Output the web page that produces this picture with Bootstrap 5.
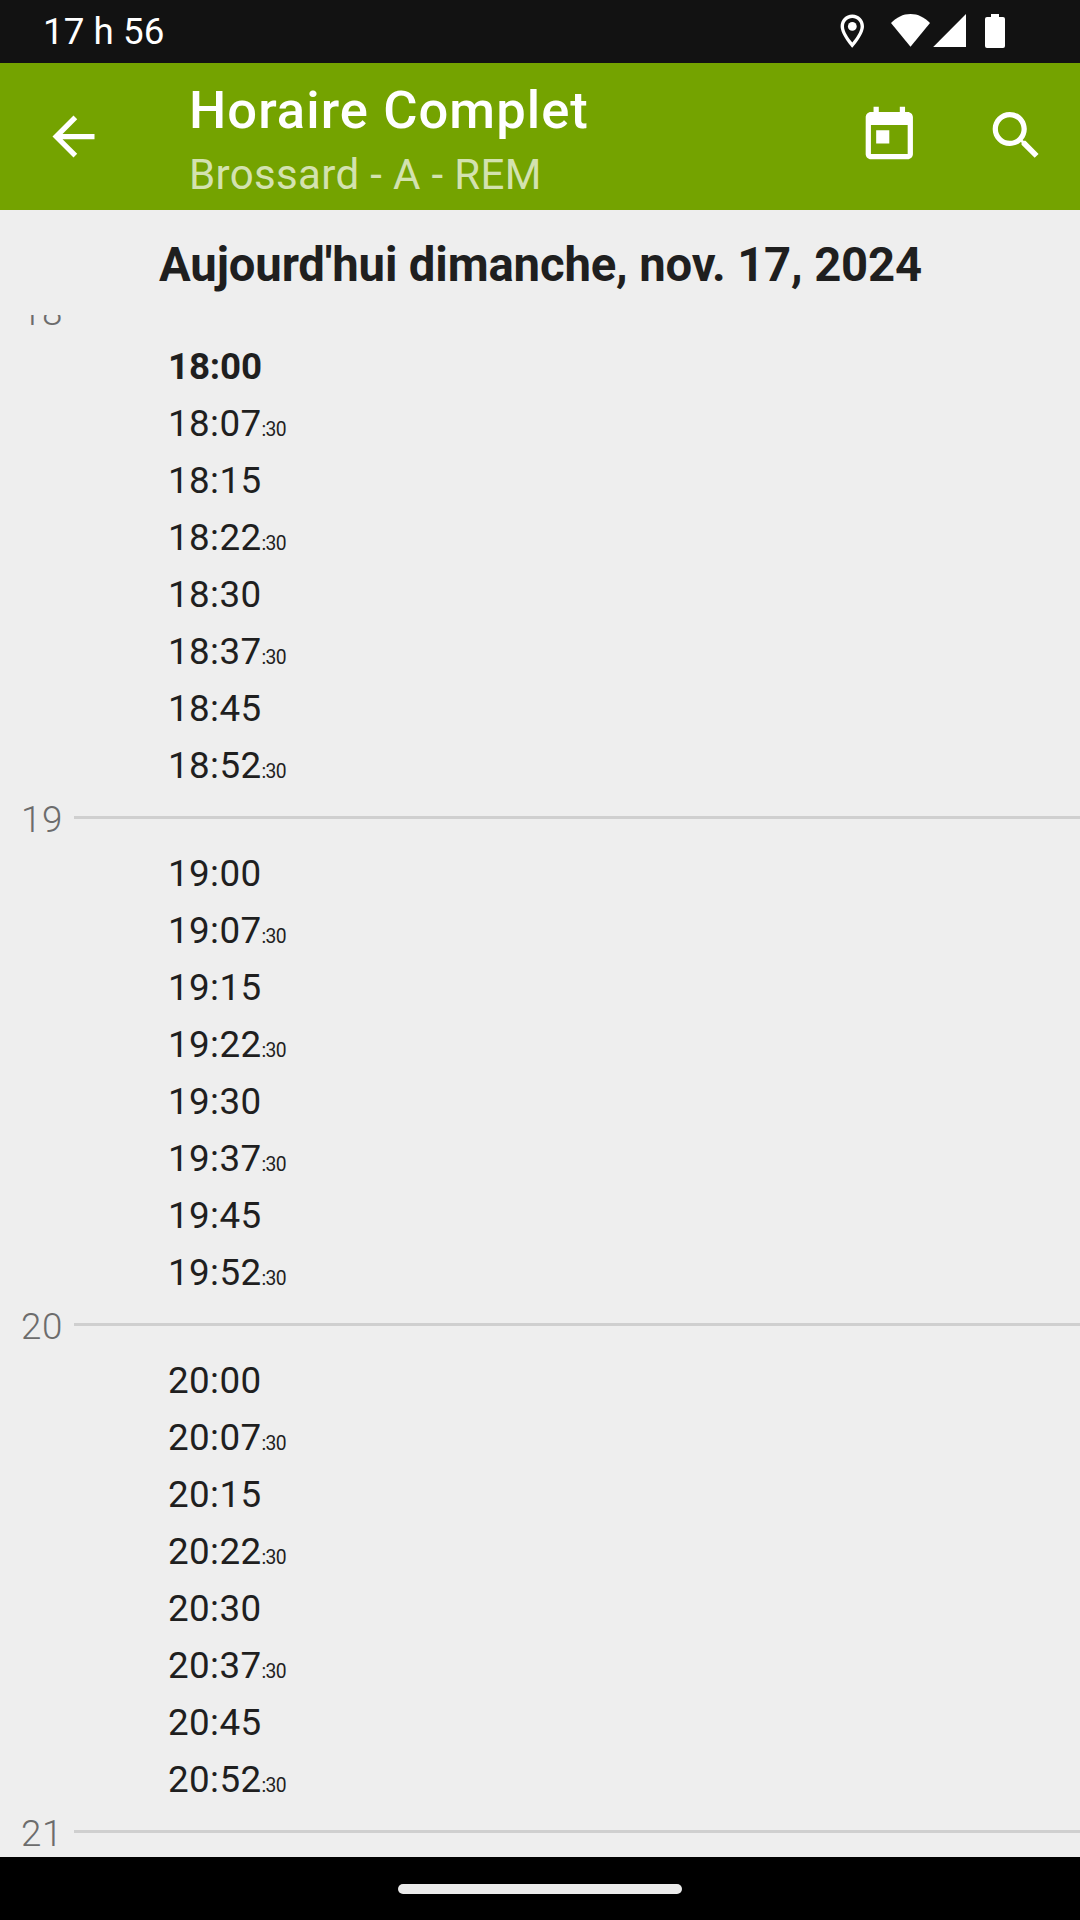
<!DOCTYPE html>
<html lang="fr">
<head>
<meta charset="utf-8">
<meta name="viewport" content="width=device-width, initial-scale=1">
<title>Horaire Complet</title>
<link rel="stylesheet" href="https://cdn.jsdelivr.net/npm/bootstrap@5.3.0/dist/css/bootstrap.min.css">
<style>
  body { font-family: Roboto, "Noto Sans", sans-serif; background: #eee; color: #1f1f1f; font-size: 36.75px; }
  .screen { width: 1080px; height: 1920px; }
  .status-bar { height: 63px; background: #121212; padding-left: 43px; }
  .clock { line-height: 64px; letter-spacing: .05px; }
  .app-bar { height: 147px; background: #74a300; }
  .back-btn { padding-left: 42px; width: 189px; }
  .app-title { font-size: 52.5px; font-weight: 500; line-height: 62px; letter-spacing: 1.07px; padding-top: 16px; }
  .app-subtitle { font-size: 42px; line-height: 49px; letter-spacing: .35px; color: rgba(255,255,255,.7); padding-top: 9px; }
  .day-title { height: 105px; font-size: 47.25px; font-weight: 700; line-height: 110px; letter-spacing: -.15px; padding-left: 1px; }
  .schedule { min-height: 0; letter-spacing: .4px; }
  .schedule-list { margin-top: -28px; }
  .hour-row { height: 51px; padding-left: 21px; }
  .hour-label { width: 53px; font-weight: 300; color: #6c6c6c; line-height: 51px; letter-spacing: .65px; }
  .hour-line { height: 3px; margin-bottom: 4px; background: #cfcfcf; }
  .departures { padding-left: 168px; }
  .departures li { height: 57px; line-height: 57px; white-space: nowrap; }
  .departures .fw-bold { letter-spacing: -.15px; }
  .secs { font-size: 19.3px; letter-spacing: -.6px; }
  .nav-area { height: 63px; background: #000; }
  .nav-pill { width: 284px; height: 10px; border-radius: 5px; background: #ebebeb; margin-top: 1px; }
</style>
</head>
<body class="overflow-hidden">
<div class="screen d-flex flex-column overflow-hidden">
  <header class="flex-shrink-0">
    <div class="status-bar d-flex text-white">
      <span class="clock flex-grow-1">17 h 56</span>
      <svg width="260" height="63" viewBox="820 0 260 63" fill="#fff" aria-hidden="true">
        <path d="M852.3 14.5c-6.7 0-11.7 5.2-11.7 11.8 0 8.5 11.7 21.5 11.7 21.5s11.7-13 11.7-21.5c0-6.6-5-11.8-11.7-11.8zm0 3.5c4.8 0 8.3 3.7 8.3 8.4 0 5-4.8 11.7-8.3 16.1-3.5-4.4-8.3-11.1-8.3-16.1 0-4.7 3.5-8.4 8.3-8.4z"/>
        <circle cx="852.3" cy="26.4" r="4.4"/>
        <path d="M891 23c5.5-5.6 12-9 19.500-9s14 3.4 19.500 9l-19.500 23.700z"/>
        <path d="M966 14v33h-32.800z"/>
        <path d="M991 14h8v3h4a2 2 0 0 1 2 2v27a2 2 0 0 1-2 2h-16a2 2 0 0 1-2-2v-27a2 2 0 0 1 2-2h4z"/>
      </svg>
    </div>
    <nav class="app-bar d-flex text-white">
      <div class="back-btn d-flex align-items-center">
        <svg width="63" height="63" viewBox="0 0 24 24" fill="#fff" role="img" aria-label="Retour"><path d="M20 11H7.830l5.590-5.590L12 4l-8 8 8 8 1.410-1.410L7.830 13H20v-2z"/></svg>
      </div>
      <div class="flex-grow-1">
        <div class="app-title">Horaire Complet</div>
        <div class="app-subtitle">Brossard - A - REM</div>
      </div>
      <svg width="260" height="147" viewBox="820 63 260 147" fill="#fff" role="img" aria-label="Date et recherche">
        <path transform="translate(857.8 104) scale(2.625)" d="M19 3h-1V1h-2v2H8V1H6v2H5c-1.110 0-1.990.9-1.990 2L3 19c0 1.100.890 2 2 2h14c1.100 0 2-.9 2-2V5c0-1.100-.9-2-2-2zm0 16H5V8h14v11zM7 10h5v5H7z"/>
        <path transform="translate(984.8 104) scale(2.625)" d="M15.500 14h-.79l-.28-.27C15.410 12.590 16 11.110 16 9.500 16 5.910 13.090 3 9.500 3S3 5.910 3 9.500 5.910 16 9.500 16c1.610 0 3.090-.59 4.230-1.570l.27.28v.79l5 4.990L20.490 19l-4.990-5zm-6 0C7.010 14 5 11.990 5 9.500S7.010 5 9.500 5 14 7.010 14 9.500 11.990 14 9.500 14z"/>
      </svg>
    </nav>
  </header>
  <h1 class="day-title text-center m-0 flex-shrink-0">Aujourd'hui dimanche, nov. 17, 2024</h1>
  <main class="schedule flex-grow-1 overflow-hidden">
    <div class="schedule-list">
      <div class="hour-row d-flex align-items-center"><span class="hour-label">18</span><div class="hour-line flex-grow-1"></div></div>
      <ul class="departures list-unstyled m-0">
        <li class="fw-bold">18:00</li>
        <li>18:07<span class="secs">:30</span></li>
        <li>18:15</li>
        <li>18:22<span class="secs">:30</span></li>
        <li>18:30</li>
        <li>18:37<span class="secs">:30</span></li>
        <li>18:45</li>
        <li>18:52<span class="secs">:30</span></li>
      </ul>
      <div class="hour-row d-flex align-items-center"><span class="hour-label">19</span><div class="hour-line flex-grow-1"></div></div>
      <ul class="departures list-unstyled m-0">
        <li>19:00</li>
        <li>19:07<span class="secs">:30</span></li>
        <li>19:15</li>
        <li>19:22<span class="secs">:30</span></li>
        <li>19:30</li>
        <li>19:37<span class="secs">:30</span></li>
        <li>19:45</li>
        <li>19:52<span class="secs">:30</span></li>
      </ul>
      <div class="hour-row d-flex align-items-center"><span class="hour-label">20</span><div class="hour-line flex-grow-1"></div></div>
      <ul class="departures list-unstyled m-0">
        <li>20:00</li>
        <li>20:07<span class="secs">:30</span></li>
        <li>20:15</li>
        <li>20:22<span class="secs">:30</span></li>
        <li>20:30</li>
        <li>20:37<span class="secs">:30</span></li>
        <li>20:45</li>
        <li>20:52<span class="secs">:30</span></li>
      </ul>
      <div class="hour-row d-flex align-items-center"><span class="hour-label">21</span><div class="hour-line flex-grow-1"></div></div>
    </div>
  </main>
  <footer class="nav-area d-flex align-items-center justify-content-center flex-shrink-0"><div class="nav-pill"></div></footer>
</div>
<script src="https://cdn.jsdelivr.net/npm/bootstrap@5.3.0/dist/js/bootstrap.bundle.min.js"></script>
</body>
</html>
